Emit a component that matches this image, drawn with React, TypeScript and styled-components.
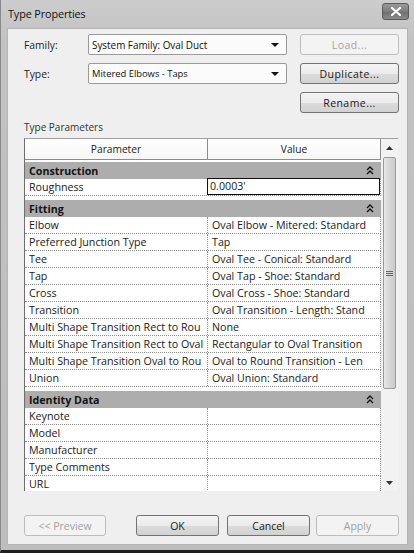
import React from "react";
import styled, { createGlobalStyle } from "styled-components";

const Global = createGlobalStyle`
  html, body { margin: 0; padding: 0; background: #1e1e1e; }
  body { font-family: "Open Sans", "Liberation Sans", sans-serif; }
`;

const FONT = `"Open Sans", "Liberation Sans", sans-serif`;

const Window = styled.div`
  width: 414px;
  height: 553px;
  box-sizing: border-box;
  display: flex;
  flex-direction: column;
  background: linear-gradient(#cdcdcd, #c2c2c2 40px, #bdbdbd);
  border-left: 1px solid #8a8a8a;
  border-bottom: 3px solid #1e1e1e;
  padding: 0 6px 5px 6px;
  font-family: ${FONT};
  color: #1a1a1a;
`;

const TitleBar = styled.div`
  height: 28px;
  display: flex;
  align-items: center;
  justify-content: space-between;
  padding: 0 0 0 1px;
  margin-right: -1px;
`;

const Title = styled.div`
  font-size: 10.8px;
  letter-spacing: -0.1px;
  color: #111;
  margin-top: -2px;
`;

const CloseBtn = styled.div`
  width: 27px;
  height: 17px;
  margin-top: -5px;
  border: 1px solid #5a5a5a;
  border-radius: 3px;
  box-sizing: border-box;
  background: linear-gradient(#9a9a9a, #7c7c7c 50%, #6e6e6e 51%, #8a8a8a);
  display: flex;
  align-items: center;
  justify-content: center;
`;

const Content = styled.div`
  flex: 1;
  background: #efefef;
  border: 1px solid #b4b4b4;
  display: flex;
  flex-direction: column;
  padding: 5px 8px 0 16px;
  box-sizing: border-box;
`;

const TopGrid = styled.div`
  display: grid;
  grid-template-columns: 51px 199px 99px;
  column-gap: 13px;
  row-gap: 8px;
  align-items: center;
`;

const Label = styled.div`
  font-size: 10.3px;
  color: #222;
`;

const Select = styled.div<{ $small?: boolean }>`
  height: 21px;
  box-sizing: border-box;
  border: 1px solid #9a9a9a;
  border-radius: 2px;
  background: #fbfbfb;
  display: flex;
  align-items: center;
  justify-content: space-between;
  padding: 0 7px 0 3px;
  font-size: ${(p) => (p.$small ? "9.4px" : "9.9px")};
  color: #111;
`;

const Arrow = styled.div`
  width: 0;
  height: 0;
  border-left: 4px solid transparent;
  border-right: 4px solid transparent;
  border-top: 4px solid #111;
`;

const Button = styled.div<{ $disabled?: boolean; $w?: number; $wide?: boolean }>`
  height: 21px;
  width: ${(p) => (p.$w ? `${p.$w}px` : "auto")};
  box-sizing: border-box;
  border: 1px solid ${(p) => (p.$disabled ? "#bdbdbd" : "#737373")};
  border-radius: 3px;
  background: ${(p) =>
    p.$disabled
      ? "#f3f3f3"
      : "linear-gradient(#f4f4f4, #ebebeb 50%, #dcdcdc 51%, #d2d2d2)"};
  color: ${(p) => (p.$disabled ? "#a2a2a2" : "#1a1a1a")};
  display: flex;
  align-items: center;
  justify-content: center;
  font-size: 10.5px;
  letter-spacing: ${(p) => (p.$wide ? "0.45px" : "0")};
`;

const Spacer = styled.div``;

const SectionLabel = styled.div`
  font-size: 10px;
  color: #333;
  margin-top: 6px;
  height: 19px;
  line-height: 17px;
`;

const GridFrame = styled.div`
  width: 374px;
  height: 353px;
  display: flex;
  box-sizing: border-box;
  border-top: 1px solid #a0a0a0;
  border-left: 1px solid #6e6e6e;
  background: #fff;
`;

const Table = styled.div`
  width: 357px;
  display: flex;
  flex-direction: column;
  overflow: hidden;
  background: #fff;
`;

const HeaderRow = styled.div`
  display: grid;
  grid-template-columns: 182px 1fr;
  height: 21px;
  box-sizing: border-box;
  border-bottom: 1px solid #8c8c8c;
  border-right: 1px solid #8c8c8c;
  background: linear-gradient(#ffffff, #f7f7f7);
  flex-shrink: 0;
`;

const HeaderCell = styled.div<{ $divider?: boolean }>`
  display: flex;
  align-items: center;
  justify-content: center;
  font-size: 10.2px;
  color: #222;
  border-left: ${(p) => (p.$divider ? "1px solid #8c8c8c" : "none")};
`;

const Group = styled.div<{ $first?: boolean }>`
  margin-top: ${(p) => (p.$first ? "2px" : "4px")};
  flex-shrink: 0;
`;

const GroupHeader = styled.div`
  height: 17px;
  background: #adadad;
  display: flex;
  align-items: center;
  justify-content: space-between;
  padding: 0 7px 0 4px;
  font-size: 10.7px;
  font-weight: 700;
  color: #141414;
`;

const Row = styled.div`
  display: grid;
  grid-template-columns: 182px 1fr;
  height: 17px;
  box-sizing: border-box;
  border-bottom: 1px dotted #8e8e8e;
  border-right: 1px dotted #8e8e8e;
`;

const Cell = styled.div<{ $value?: boolean; $edit?: boolean }>`
  font-size: 10.7px;
  line-height: 16px;
  color: #1a1a1a;
  white-space: nowrap;
  overflow: hidden;
  padding-left: ${(p) => (p.$edit ? "2px" : "4px")};
  border-left: ${(p) => (p.$value ? "1px dotted #8e8e8e" : "none")};
  ${(p) =>
    p.$edit
      ? `border: 1px solid #111; margin-top:-1px; line-height: 15px;`
      : ""}
`;

const Scrollbar = styled.div`
  width: 17px;
  display: flex;
  flex-direction: column;
  align-items: center;
  background: #f2f2f2;
  box-sizing: border-box;
`;

const ScrollArrow = styled.div`
  height: 17px;
  width: 17px;
  display: flex;
  align-items: center;
  justify-content: center;
`;

const Thumb = styled.div`
  width: 13px;
  height: 232px;
  box-sizing: border-box;
  border: 1px solid #9a9a9a;
  border-radius: 2px;
  background: linear-gradient(90deg, #e9e9e9, #d8d8d8 45%, #cbcbcb);
  display: flex;
  align-items: center;
  justify-content: center;
  margin-top: 1px;
`;

const Track = styled.div`
  flex: 1;
`;

const Footer = styled.div`
  display: flex;
  align-items: center;
  margin-top: 24px;
  gap: 8px;
`;

const Chevrons = () => (
  <svg width="8" height="9" viewBox="0 0 8 9">
    <path d="M1 4 L4 1 L7 4" fill="none" stroke="#111" strokeWidth="1.4" />
    <path d="M1 8 L4 5 L7 8" fill="none" stroke="#111" strokeWidth="1.4" />
  </svg>
);

type Param = { name: string; value: string; edit?: boolean };
type GroupT = { title: string; rows: Param[] };

const groups: GroupT[] = [
  { title: "Construction", rows: [{ name: "Roughness", value: "0.0003'", edit: true }] },
  {
    title: "Fitting",
    rows: [
      { name: "Elbow", value: "Oval Elbow - Mitered: Standard" },
      { name: "Preferred Junction Type", value: "Tap" },
      { name: "Tee", value: "Oval Tee - Conical: Standard" },
      { name: "Tap", value: "Oval Tap - Shoe: Standard" },
      { name: "Cross", value: "Oval Cross - Shoe: Standard" },
      { name: "Transition", value: "Oval Transition - Length: Stand" },
      { name: "Multi Shape Transition Rect to Rou", value: "None" },
      { name: "Multi Shape Transition Rect to Oval", value: "Rectangular to Oval Transition" },
      { name: "Multi Shape Transition Oval to Rou", value: "Oval to Round Transition - Len" },
      { name: "Union", value: "Oval Union: Standard" },
    ],
  },
  {
    title: "Identity Data",
    rows: [
      { name: "Keynote", value: "" },
      { name: "Model", value: "" },
      { name: "Manufacturer", value: "" },
      { name: "Type Comments", value: "" },
      { name: "URL", value: "" },
    ],
  },
];

export default function App() {
  return (
    <>
      <Global />
      <Window>
        <TitleBar>
          <Title>Type Properties</Title>
          <CloseBtn>
            <svg width="12" height="9" viewBox="0 0 12 9">
              <path d="M2 1 L10 8 M10 1 L2 8" stroke="#fff" strokeWidth="2.2" strokeLinecap="round" />
            </svg>
          </CloseBtn>
        </TitleBar>
        <Content>
          <TopGrid>
            <Label>Family:</Label>
            <Select>
              System Family: Oval Duct
              <Arrow />
            </Select>
            <Button $disabled $wide>Load...</Button>
            <Label>Type:</Label>
            <Select $small>
              Mitered Elbows - Taps
              <Arrow />
            </Select>
            <Button $wide>Duplicate...</Button>
            <Spacer />
            <Spacer />
            <Button $wide>Rename...</Button>
          </TopGrid>
          <SectionLabel>Type Parameters</SectionLabel>
          <GridFrame>
            <Table>
              <HeaderRow>
                <HeaderCell>Parameter</HeaderCell>
                <HeaderCell $divider>Value</HeaderCell>
              </HeaderRow>
              {groups.map((g, gi) => (
                <Group key={g.title} $first={gi === 0}>
                  <GroupHeader>
                    {g.title}
                    <Chevrons />
                  </GroupHeader>
                  {g.rows.map((r) => (
                    <Row key={r.name}>
                      <Cell>{r.name}</Cell>
                      <Cell $value $edit={r.edit}>
                        {r.value}
                      </Cell>
                    </Row>
                  ))}
                </Group>
              ))}
            </Table>
            <Scrollbar>
              <ScrollArrow>
                <svg width="7" height="4" viewBox="0 0 7 4">
                  <path d="M0 4 L3.5 0 L7 4 Z" fill="#333" />
                </svg>
              </ScrollArrow>
              <Thumb>
                <svg width="7" height="7" viewBox="0 0 7 7">
                  <path d="M0 1.5 H7 M0 3.5 H7 M0 5.5 H7" stroke="#666" strokeWidth="1" />
                </svg>
              </Thumb>
              <Track />
              <ScrollArrow>
                <svg width="7" height="4" viewBox="0 0 7 4">
                  <path d="M0 0 L3.5 4 L7 0 Z" fill="#333" />
                </svg>
              </ScrollArrow>
            </Scrollbar>
          </GridFrame>
          <Footer>
            <Button $disabled $w={82}>&lt;&lt; Preview</Button>
            <Button $w={83} style={{ marginLeft: 22 }}>OK</Button>
            <Button $w={83}>Cancel</Button>
            <Button $disabled $w={83} style={{ marginLeft: -2 }}>Apply</Button>
          </Footer>
        </Content>
      </Window>
    </>
  );
}
